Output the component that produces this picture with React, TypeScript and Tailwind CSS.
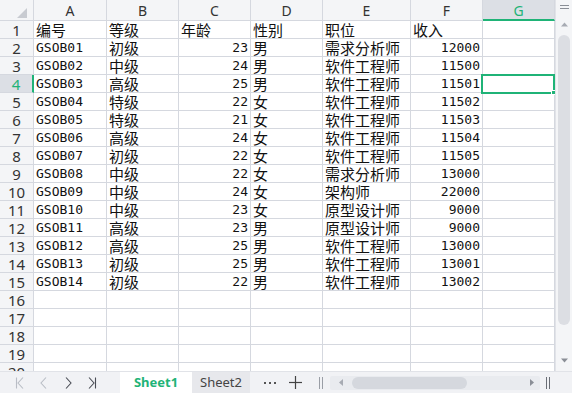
import React from "react";

const rows: (string | number)[][] = [
  ["编号", "等级", "年龄", "性别", "职位", "收入"],
  ["GSOB01", "初级", 23, "男", "需求分析师", 12000],
  ["GSOB02", "中级", 24, "男", "软件工程师", 11500],
  ["GSOB03", "高级", 25, "男", "软件工程师", 11501],
  ["GSOB04", "特级", 22, "女", "软件工程师", 11502],
  ["GSOB05", "特级", 21, "女", "软件工程师", 11503],
  ["GSOB06", "高级", 24, "女", "软件工程师", 11504],
  ["GSOB07", "初级", 22, "女", "软件工程师", 11505],
  ["GSOB08", "中级", 22, "女", "需求分析师", 13000],
  ["GSOB09", "中级", 24, "女", "架构师", 22000],
  ["GSOB10", "中级", 23, "女", "原型设计师", 9000],
  ["GSOB11", "高级", 23, "男", "原型设计师", 9000],
  ["GSOB12", "高级", 25, "男", "软件工程师", 13000],
  ["GSOB13", "初级", 25, "男", "软件工程师", 13001],
  ["GSOB14", "初级", 22, "男", "软件工程师", 13002],
];

const cols = ["A", "B", "C", "D", "E", "F", "G"];

function Cell({ v }: { v: string | number | undefined }) {
  if (v === undefined) {
    return <div className="border-r border-b border-[#d5d8df] h-[18px]" />;
  }
  if (typeof v === "number") {
    return (
      <div className="border-r border-b border-[#d5d8df] h-[18px] pr-[2px] text-right text-[13px] leading-[17px] text-[#111] font-['DejaVu_Sans_Mono',monospace] whitespace-nowrap">
        {v}
      </div>
    );
  }
  const cjk = /[\u4e00-\u9fff]/.test(v);
  return (
    <div
      className={
        cjk
          ? "border-r border-b border-[#d5d8df] h-[18px] pl-[2px] text-[15px] leading-[17px] text-[#111] font-['Noto_Sans_CJK_SC',sans-serif] whitespace-nowrap"
          : "border-r border-b border-[#d5d8df] h-[18px] pl-[2px] text-[13px] leading-[17px] text-[#111] font-['DejaVu_Sans_Mono',monospace] whitespace-nowrap"
      }
    >
      {v}
    </div>
  );
}

function NavIcon({ kind, dim }: { kind: "first" | "prev" | "next" | "last"; dim?: boolean }) {
  const c = dim ? "#b9bdc5" : "#4a4d55";
  return (
    <svg width="12" height="12" viewBox="0 0 12 12" fill="none" stroke={c} strokeWidth="1.1">
      {kind === "first" && (
        <>
          <line x1="2.5" y1="0.5" x2="2.5" y2="11.5" />
          <polyline points="9,0.5 4,6 9,11.5" />
        </>
      )}
      {kind === "prev" && <polyline points="8,0.5 3,6 8,11.5" />}
      {kind === "next" && <polyline points="4,0.5 9,6 4,11.5" />}
      {kind === "last" && (
        <>
          <polyline points="3,0.5 8,6 3,11.5" />
          <line x1="9.5" y1="0.5" x2="9.5" y2="11.5" />
        </>
      )}
    </svg>
  );
}

export default function App() {
  const totalRows = 20;
  return (
    <div className="w-[572px] h-[393px] bg-white flex flex-col overflow-hidden select-none">
      <div className="flex flex-1 min-h-0">
        {/* grid */}
        <div className="w-[555px] relative overflow-hidden">
          <div className="grid grid-cols-[34px_73px_72px_72px_72px_88px_72px_72px]">
            <div className="h-[21px] bg-[#f4f5f7] border-r border-b border-[#d5d8df] relative">
              <svg className="absolute left-[17px] top-[8px]" width="10" height="10" viewBox="0 0 10 10">
                <polygon points="10,0 10,10 0,10" fill="#c8cbd1" />
              </svg>
            </div>
            {cols.map((c) =>
              c === "G" ? (
                <div
                  key={c}
                  className="h-[21px] bg-[#dcdfe5] border-r border-[#d5d8df] border-b-2 border-b-[#1fb377] text-center text-[14px] leading-[21px] text-[#1fb377] font-['Noto_Sans',sans-serif]"
                >
                  {c}
                </div>
              ) : (
                <div
                  key={c}
                  className="h-[21px] bg-[#f4f5f7] border-r border-b border-[#d5d8df] text-center text-[14px] leading-[21px] text-[#333] font-['Noto_Sans',sans-serif]"
                >
                  {c}
                </div>
              )
            )}
            {Array.from({ length: totalRows }, (_, i) => {
              const r = i + 1;
              const data = rows[i] || [];
              const sel = r === 4;
              return (
                <React.Fragment key={r}>
                  <div
                    className={
                      sel
                        ? "h-[18px] bg-[#dcdfe5] border-r-2 border-r-[#1fb377] border-b border-[#d5d8df] text-center text-[15px] leading-[18px] text-[#1fb377] font-['Noto_Sans',sans-serif]"
                        : "h-[18px] bg-[#f4f5f7] border-r border-b border-[#d5d8df] text-center text-[15px] leading-[18px] text-[#333] font-['Noto_Sans',sans-serif]"
                    }
                  >
                    {r}
                  </div>
                  {cols.map((c, ci) => (
                    <Cell key={c} v={data[ci]} />
                  ))}
                </React.Fragment>
              );
            })}
          </div>
          {/* selection box */}
          <div className="absolute left-[481px] top-[74px] w-[74px] h-[20px] border-2 border-[#1fb377]" />
          <div className="absolute left-[551px] top-[90px] w-[5px] h-[5px] bg-[#1fb377] border border-white" />
        </div>
        {/* vertical scrollbar */}
        <div className="w-[17px] bg-[#f4f5f7] border-l border-[#e1e3e8] flex flex-col items-center">
          <div className="h-[20px] flex flex-col items-center justify-center gap-[2px] pb-[6px]">
            <div className="w-[9px] h-[1px] bg-[#8a8e96]" />
            <div className="w-[9px] h-[1px] bg-[#8a8e96]" />
          </div>
          <svg className="mt-[2px]" width="7" height="5" viewBox="0 0 7 5">
            <polygon points="3.5,0.5 7,4.5 0,4.5" fill="#a7abb3" />
          </svg>
          <div className="mt-[8px] w-[12px] h-[290px] rounded-full bg-[#dcdee3]" />
          <div className="flex-1" />
          <svg className="mb-[8px]" width="7" height="5" viewBox="0 0 7 5">
            <polygon points="0,0.5 7,0.5 3.5,4.5" fill="#8a8e96" />
          </svg>
        </div>
      </div>
      {/* bottom bar */}
      <div className="h-[22px] bg-[#f1f2f5] border-t border-[#e1e3e8] flex items-center text-[14px] font-['Noto_Sans',sans-serif]">
        <div className="w-[120px] flex items-center pl-[14px] gap-[12px]">
          <NavIcon kind="first" dim />
          <NavIcon kind="prev" dim />
          <NavIcon kind="next" />
          <NavIcon kind="last" />
        </div>
        <div className="w-[72px] h-full bg-white flex items-center justify-center text-[#1fb377] font-bold text-[13px]">
          Sheet1
        </div>
        <div className="w-[58px] h-full bg-[#e7e8ec] flex items-center justify-center text-[#444] text-[13px]">
          Sheet2
        </div>
        <div className="w-[40px] flex items-center justify-center gap-[3px]">
          <div className="w-[2px] h-[2px] bg-[#555]" />
          <div className="w-[2px] h-[2px] bg-[#555]" />
          <div className="w-[2px] h-[2px] bg-[#555]" />
        </div>
        <div className="w-[10px] flex items-center justify-center">
          <svg width="13" height="13" viewBox="0 0 13 13" stroke="#444" strokeWidth="1.2" className="shrink-0">
            <line x1="6.5" y1="0" x2="6.5" y2="13" />
            <line x1="0" y1="6.5" x2="13" y2="6.5" />
          </svg>
        </div>
        <div className="w-[23px] flex items-center justify-end gap-[2px]">
          <div className="w-[1px] h-[12px] bg-[#9a9ea6]" />
          <div className="w-[1px] h-[12px] bg-[#9a9ea6]" />
        </div>
        <div className="ml-[7px] w-[210px] h-[14px] bg-[#e9ebef] rounded-[2px] flex items-center">
          <svg className="ml-[9px]" width="4" height="7" viewBox="0 0 4 7">
            <polygon points="4,0 4,7 0,3.5" fill="#a7abb3" />
          </svg>
          <div className="ml-[9px] w-[115px] h-[12px] rounded-full bg-[#d5d8de]" />
          <div className="flex-1" />
          <svg className="mr-[6px]" width="4" height="7" viewBox="0 0 4 7">
            <polygon points="0,0 0,7 4,3.5" fill="#8a8e96" />
          </svg>
        </div>
        <div className="ml-[6px] flex items-center gap-[2px]">
          <div className="w-[1px] h-[12px] bg-[#6a6e76]" />
          <div className="w-[1px] h-[12px] bg-[#6a6e76]" />
        </div>
      </div>
    </div>
  );
}
